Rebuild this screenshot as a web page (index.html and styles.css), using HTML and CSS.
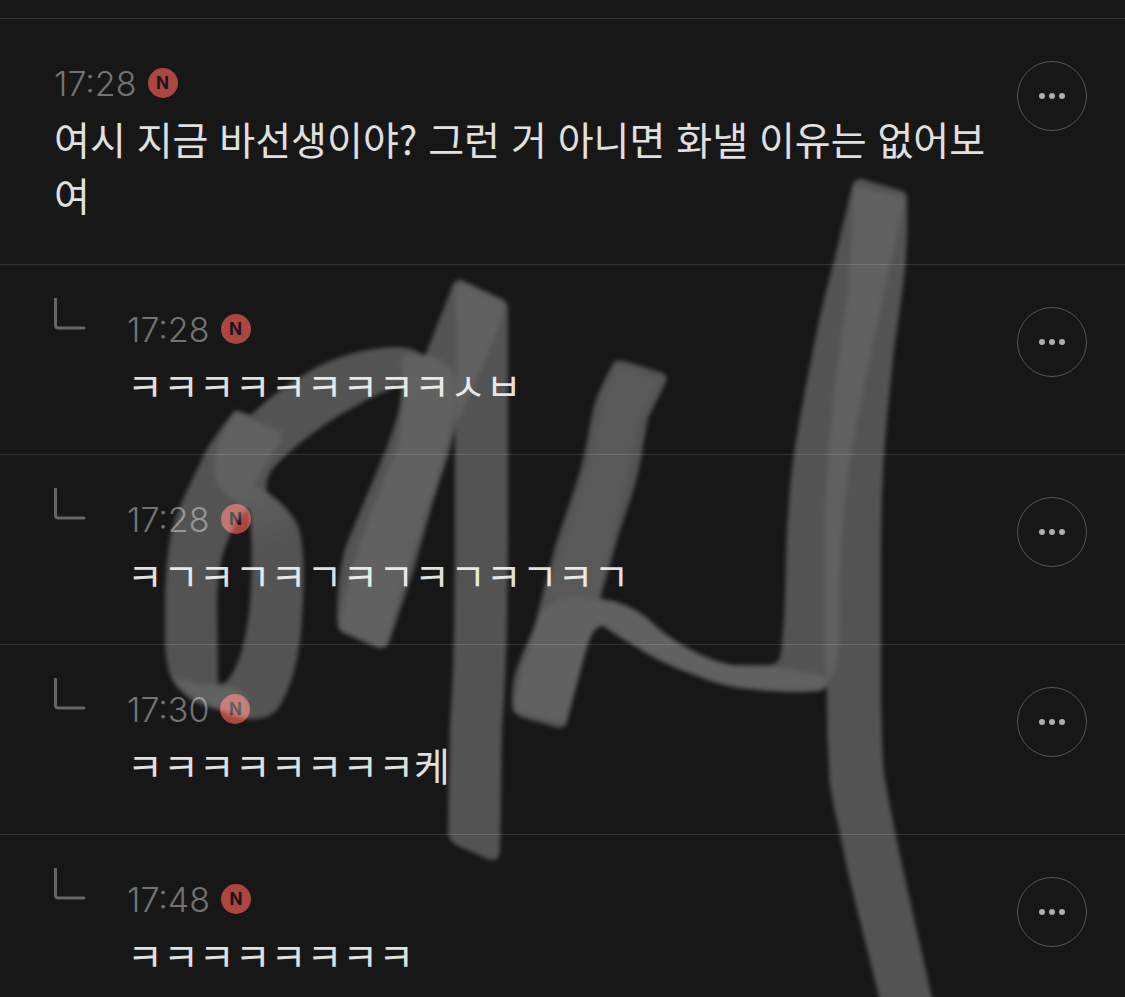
FILE: index.html
```html
<!DOCTYPE html>
<html lang="ko">
<head>
    <meta charset="UTF-8">
    <meta name="viewport" content="width=device-width, initial-scale=1.0">
    <title>댓글</title>
    <link rel="stylesheet" href="styles.css">
</head>
<body>
    <main class="comments">
        <article class="comment">
            <div class="body">
                <div class="meta"><time>17:28</time><span class="new">N</span></div>
                <p>여시 지금 바선생이야? 그런 거 아니면 화낼 이유는 없어보여</p>
            </div>
            <button class="more" aria-label="더보기">
                <svg viewBox="0 0 28 8"><circle cx="4" cy="4" r="3"/><circle cx="14" cy="4" r="3"/><circle cx="24" cy="4" r="3"/></svg>
            </button>
        </article>

        <article class="comment reply">
            <svg class="arrow" viewBox="0 0 32 32"><path d="M1.5 1V27Q1.5 30 4.5 30H30"/></svg>
            <div class="body">
                <div class="meta"><time>17:28</time><span class="new">N</span></div>
                <p>ㅋㅋㅋㅋㅋㅋㅋㅋㅋㅅㅂ</p>
            </div>
            <button class="more" aria-label="더보기">
                <svg viewBox="0 0 28 8"><circle cx="4" cy="4" r="3"/><circle cx="14" cy="4" r="3"/><circle cx="24" cy="4" r="3"/></svg>
            </button>
        </article>

        <article class="comment reply">
            <svg class="arrow" viewBox="0 0 32 32"><path d="M1.5 1V27Q1.5 30 4.5 30H30"/></svg>
            <div class="body">
                <div class="meta"><time>17:28</time><span class="new">N</span></div>
                <p>ㅋㄱㅋㄱㅋㄱㅋㄱㅋㄱㅋㄱㅋㄱ</p>
            </div>
            <button class="more" aria-label="더보기">
                <svg viewBox="0 0 28 8"><circle cx="4" cy="4" r="3"/><circle cx="14" cy="4" r="3"/><circle cx="24" cy="4" r="3"/></svg>
            </button>
        </article>

        <article class="comment reply">
            <svg class="arrow" viewBox="0 0 32 32"><path d="M1.5 1V27Q1.5 30 4.5 30H30"/></svg>
            <div class="body">
                <div class="meta"><time>17:30</time><span class="new">N</span></div>
                <p>ㅋㅋㅋㅋㅋㅋㅋㅋ케</p>
            </div>
            <button class="more" aria-label="더보기">
                <svg viewBox="0 0 28 8"><circle cx="4" cy="4" r="3"/><circle cx="14" cy="4" r="3"/><circle cx="24" cy="4" r="3"/></svg>
            </button>
        </article>

        <article class="comment reply">
            <svg class="arrow" viewBox="0 0 32 32"><path d="M1.5 1V27Q1.5 30 4.5 30H30"/></svg>
            <div class="body">
                <div class="meta"><time>17:48</time><span class="new">N</span></div>
                <p>ㅋㅋㅋㅋㅋㅋㅋㅋ</p>
            </div>
            <button class="more" aria-label="더보기">
                <svg viewBox="0 0 28 8"><circle cx="4" cy="4" r="3"/><circle cx="14" cy="4" r="3"/><circle cx="24" cy="4" r="3"/></svg>
            </button>
        </article>

        <!-- marker drawing over the comments -->
        <svg class="marker" viewBox="0 0 1125 1024" aria-hidden="true">
            <defs>
                <filter id="soft"><feGaussianBlur stdDeviation="2"/></filter>
                <filter id="softer"><feGaussianBlur stdDeviation="2.5"/></filter>
                <linearGradient id="ringFade" gradientUnits="userSpaceOnUse" x1="245" y1="490" x2="270" y2="550">
                    <stop offset="0" stop-color="#fff"/>
                    <stop offset="1" stop-color="#fff" stop-opacity="0"/>
                </linearGradient>
            </defs>
            <g class="ink" filter="url(#soft)">
                <path fill-rule="evenodd" d="M235 410L251 415C270 397 290 382 317 367C345 353 375 347 400 347C410 348 418 351 425 356L452 287Q455 278 462 280L502 299Q508 302 508 309V480C508 570 508 650 502 730L500 852Q498 862 490 860L458 846Q448 841 448 832L450 727C455 660 455 600 455 427C451 450 445 465 440 480C427 520 420 550 412 575L390 640Q387 650 378 648L343 633Q337 629 337 620C337 595 340 562 347 543L387 447C397 420 401 405 402 385C385 390 350 408 327 423C300 442 288 453 275 466C268 474 265 482 267 492C285 505 297 518 300 533C306 560 303 600 302 620C300 650 294 680 283 700C277 713 268 719 253 719C240 719 230 715 220 710C202 705 190 702 178 688C165 673 165 650 165 620C165 580 167 550 172 530C178 508 190 484 203 457C210 442 224 424 235 410ZM248 508C240 515 230 530 222 557C218 575 217 590 217 610L218 683Q222 686 228 680C240 665 245 640 248 620C252 600 252 550 251 523Q250 511 248 508Z"/>
                <path d="M615 361Q622 360 628 362L663 373Q668 376 666 382L648 418C644 437 642 458 637 477C631 500 624 517 617 540L600 599C616 601 630 606 643 615C652 621 658 629 667 635C688 650 710 661 733 665H768Q779 665 781 653C785 620 785 590 786 557C787 520 790 480 795 447C801 410 807 380 815 340C820 315 826 290 833 265L852 187Q854 178 862 179L903 191Q907 193 907 200C908 230 906 270 902 293C898 325 894 345 892 370C884 440 881 490 881 560V703C882 730 882 750 884 773C894 835 915 920 938 1024H886L879 997C866 942 848 880 840 833C832 800 829 785 829 767C827 740 827 715 827 687Q822 692 808 692C780 693 755 690 733 687C715 683 702 678 687 672C665 664 650 656 633 645C620 638 610 631 603 626Q597 626 593 633C588 640 586 650 583 660L568 717Q566 729 559 728L523 718Q512 714 512 705C512 694 512 685 515 674C522 650 533 635 537 617C542 595 549 570 555 547C565 515 576 488 583 460C589 435 591 415 595 403C600 388 609 370 615 361Z"/>
            </g>
            <g class="overlap" filter="url(#softer)">
                <path d="M236 412L283 433C280 445 272 455 262 470L252 489L237 502C225 495 217 488 214 472C213 455 217 440 236 412Z"/>
                <path fill="url(#ringFade)" d="M237 502L253 485C280 500 299 518 301 560L252 545Q252 520 237 502Z"/>
                <path d="M401 357C420 350 440 357 451 368C458 390 455 415 451 430C444 460 435 490 425 515C413 550 402 590 386 645L375 645L340 629C344 590 357 550 368 520L397 447C403 420 406 390 401 357Z"/>
                <path d="M455 288L463 283L505 303L498 330C485 360 473 390 456 425Z"/>
                <path d="M172 675C200 690 225 680 245 693L250 716C225 712 190 705 172 675Z"/>
                <path d="M537 620C545 602 558 597 575 597C600 597 625 600 643 616C662 633 690 655 733 666L790 668C808 675 820 672 828 678L822 689C800 692 755 690 733 686C695 678 660 662 633 644L603 625Q595 626 591 636L566 724L516 712C514 680 530 650 537 620Z"/>
                <path d="M854 186L904 197C900 230 888 270 880 313C873 345 866 375 860 407C850 455 842 510 841 560C840 600 841 640 835 670L827 683C824 650 825 610 825 580C825 530 826 490 828 460C829 430 833 410 835 385C840 340 848 300 850 265Z"/>
            </g>
            <g class="streak" filter="url(#softer)">
                <path d="M617 365L660 378L640 420L600 596L545 600L590 460L603 400Z"/>
            </g>
        </svg>
    </main>
</body>
</html>
```
FILE: styles.css
```css
* {
    box-sizing: border-box;
}

body {
    margin: 0;
    background-color: #171717;
    color: #e0e0e0;
    font-family: "Noto Sans CJK KR", sans-serif;
}

.comments {
    position: relative;
    padding-top: 18px;
    overflow: hidden;
}

.comment {
    display: flex;
    align-items: flex-start;
    padding: 0 38px 42px 54px;
    border-top: 1px solid #343434;
}

.body {
    flex: 1;
    min-width: 0;
    padding-top: 44px;
}

.meta {
    display: flex;
    align-items: center;
    gap: 11px;
    height: 40px;
    margin-bottom: 7px;
}

.meta time {
    color: #737373;
    font-family: Inter, sans-serif;
    font-size: 34px;
    font-weight: 300;
}

.new {
    display: flex;
    align-items: center;
    justify-content: center;
    width: 30px;
    height: 30px;
    border-radius: 50%;
    background-color: #ad4540;
    color: #171717;
    font-family: Inter, sans-serif;
    font-size: 17px;
    font-weight: 700;
}

.body p {
    margin: 0;
    font-size: 39px;
    line-height: 56px;
    word-break: break-all;
}

.arrow {
    width: 32px;
    height: 32px;
    margin: 33px 41px 0 0;
    fill: none;
    stroke: #666;
    stroke-width: 3;
    stroke-linecap: round;
}

.more {
    display: flex;
    align-items: center;
    justify-content: center;
    width: 70px;
    height: 70px;
    margin-top: 42px;
    padding: 0;
    border: 1px solid #555;
    border-radius: 50%;
    background: none;
}

.more svg {
    width: 28px;
    height: 8px;
    fill: #adadad;
}

.marker {
    position: absolute;
    top: 0;
    left: 0;
    width: 100%;
    pointer-events: none;
    fill: #fff;
}

.ink {
    opacity: 0.26;
}

.overlap {
    opacity: 0.08;
}

.streak {
    opacity: 0.03;
}
```
